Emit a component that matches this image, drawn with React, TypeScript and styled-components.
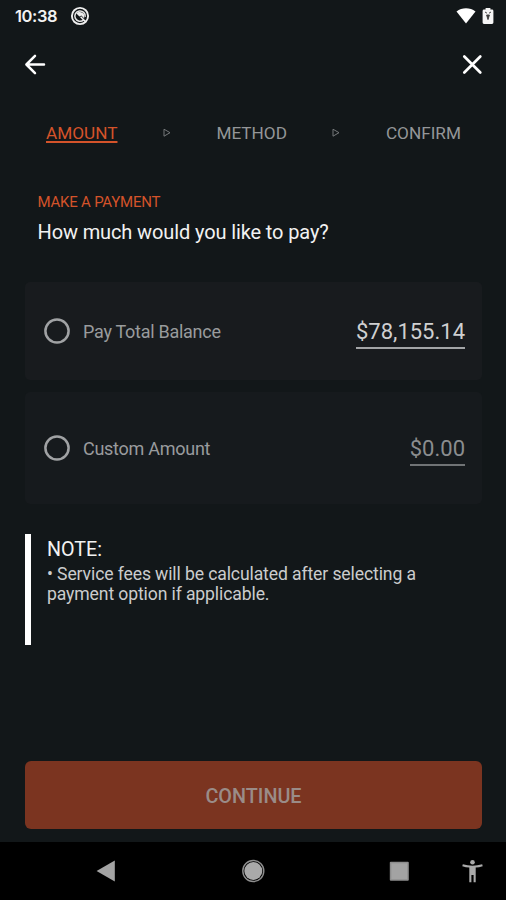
import React from "react";
import styled, { createGlobalStyle } from "styled-components";

const GlobalStyle = createGlobalStyle`
  * { box-sizing: border-box; }
  body { margin: 0; background: #121719; }
`;

const Screen = styled.main`
  width: 506px;
  height: 900px;
  display: flex;
  flex-direction: column;
  overflow: hidden;
  background: #121719;
  color: #f2f2f2;
  font-family: Roboto, "Liberation Sans", sans-serif;
`;

const StatusBar = styled.div`
  height: 32px;
  padding: 0 12px 1px 15px;
  display: flex;
  align-items: center;
  flex-shrink: 0;
`;

const Clock = styled.span`
  width: 55px;
  font: 600 16.5px/32px Inter, sans-serif;
  letter-spacing: -0.4px;
  white-space: nowrap;
`;

const StatusIcons = styled.div`
  margin-left: auto;
  display: flex;
  align-items: center;
  gap: 6px;
`;

const Header = styled.header`
  height: 65px;
  padding: 0 22px 1px 23px;
  display: flex;
  align-items: center;
  justify-content: space-between;
  flex-shrink: 0;
`;

const IconButton = styled.button`
  width: 24px;
  height: 24px;
  padding: 0;
  border: 0;
  background: none;
  color: #fff;
  svg { display: block; }
`;

const Steps = styled.nav`
  height: 72px;
  padding: 0 45px 0 46px;
  display: flex;
  align-items: center;
  justify-content: space-between;
  flex-shrink: 0;
`;

const Step = styled.span<{ $active?: boolean }>`
  font-size: 17.2px;
  line-height: 20px;
  color: ${(p) => (p.$active ? "#d4532a" : "#949698")};
  text-decoration: ${(p) => (p.$active ? "underline" : "none")};
  text-decoration-thickness: 1.5px;
  text-underline-offset: 2px;
`;

const Intro = styled.section`
  height: 113px;
  padding: 24px 37px 0 37.5px;
  flex-shrink: 0;
`;

const Eyebrow = styled.div`
  font-size: 15px;
  line-height: 18px;
  letter-spacing: -0.22px;
  color: #d4532a;
`;

const Title = styled.h1`
  margin: 9px 0 0;
  font-size: 20px;
  line-height: 24px;
  font-weight: 400;
  letter-spacing: -0.12px;
`;

const Options = styled.section`
  margin: 0 24px 0 25px;
  display: flex;
  flex-direction: column;
  gap: 12px;
`;

const Option = styled.label<{ $height: number; $raised?: boolean }>`
  height: ${(p) => p.$height}px;
  padding: 0 17px 0 19px;
  display: flex;
  align-items: center;
  border-radius: 5px;
  background: ${(p) => (p.$raised ? "#181b1e" : "#161a1d")};
`;

const RadioIcon = styled.svg`
  width: 26px;
  height: 26px;
  margin-right: 13px;
  fill: none;
  stroke: #a0a2a4;
  stroke-width: 2.5px;
`;

const OptionLabel = styled.span`
  padding-top: 2px;
  font-size: 18px;
  line-height: 22px;
  letter-spacing: -0.27px;
  color: #999b9d;
`;

const Amount = styled.span<{ $muted?: boolean }>`
  margin: 3px 0 0 auto;
  font-size: 22px;
  line-height: 31px;
  border-bottom: 2px solid ${(p) => (p.$muted ? "#707375" : "#a3a5a7")};
  color: ${(p) => (p.$muted ? "#8b8d8f" : "#cfd0d1")};
`;

const Note = styled.aside`
  width: 457px;
  height: 111px;
  margin: 30px 0 0 25px;
  padding: 4px 0 0 16px;
  border-left: 6px solid #fff;
  flex-shrink: 0;
`;

const NoteTitle = styled.div`
  font-size: 19.7px;
  line-height: 23px;
`;

const NoteText = styled.p`
  margin: 3px 0 0;
  font-size: 17.6px;
  line-height: 20px;
  letter-spacing: -0.12px;
  color: #cbcccd;
  white-space: nowrap;
`;

const Footer = styled.div`
  margin-top: auto;
  padding: 0 24px 13px 25px;
`;

const Continue = styled.button`
  display: block;
  width: 100%;
  height: 68px;
  padding: 4px 0 0;
  border: 0;
  border-radius: 6px;
  background: #7b3420;
  color: #9a8c88;
  font: 500 19.8px/24px Roboto, sans-serif;
`;

const SystemNav = styled.div`
  height: 58px;
  padding: 0 22px 0 94px;
  display: flex;
  align-items: center;
  background: #000;
  flex-shrink: 0;
`;

const NavItem = styled.span<{ $gap?: number }>`
  width: 24px;
  height: 24px;
  margin-left: ${(p) => p.$gap ?? 0}px;
  svg { display: block; }
`;

function Radio() {
  return (
    <RadioIcon viewBox="0 0 26 26">
      <circle cx="13" cy="13" r="11.6" />
    </RadioIcon>
  );
}

function StepArrow() {
  return (
    <svg width="8" height="10" viewBox="0 0 8 10" fill="none" stroke="#75787a">
      <path d="M1 1.2L7 4.7L1 8.2Z" />
    </svg>
  );
}

export default function App() {
  return (
    <Screen>
      <GlobalStyle />
      <StatusBar>
        <Clock>10:38</Clock>
        <svg width="20" height="20" viewBox="0 0 20 20" fill="none">
          <circle cx="10" cy="10" r="8.1" stroke="#eee" strokeWidth="1.9" />
          <path d="M13.6 13.9A5.2 5.2 0 1 1 15.2 10.8" stroke="#e4e4e4" strokeWidth="1.5" />
          <path d="M6.4 7.4C8.4 5.2 12.6 5.6 14.2 8.8V12.4L11.4 9.6L9.4 10.6Z" fill="#eee" />
          <path d="M10.6 10.8L15.2 15.4" stroke="#eee" strokeWidth="1.5" />
        </svg>
        <StatusIcons>
          <svg width="20" height="18" viewBox="0 0 20 18">
            <path d="M.5 4.6C6 .2 14 .2 19.5 4.6L10 16.6Z" fill="#fff" />
          </svg>
          <svg width="12" height="18" viewBox="0 0 12 18">
            <path d="M3.6 1H8.4V2.6H10Q11.4 2.6 11.4 4V15.6Q11.4 17 10 17H2Q.6 17 .6 15.6V4Q.6 2.6 2 2.6H3.6Z" fill="#f5f5f5" />
            <path d="M3 5L5 6.2M9 5L7 6.2M4.6 8H7.4L6 12.6Z" stroke="#444" fill="#333" strokeWidth="1" />
          </svg>
        </StatusIcons>
      </StatusBar>
      <Header>
        <IconButton aria-label="Back">
          <svg width="24" height="24" viewBox="0 0 24 24" fill="none" stroke="currentColor" strokeWidth="2.5" strokeLinecap="round" strokeLinejoin="round">
            <path d="M12 3.8L3.4 12.5L12 21.2M3.8 12.5H21" />
          </svg>
        </IconButton>
        <IconButton aria-label="Close">
          <svg width="24" height="24" viewBox="0 0 24 24" stroke="currentColor" strokeWidth="2.7" strokeLinecap="round">
            <path d="M4.3 4.5L20.3 20.5M20.3 4.5L4.3 20.5" />
          </svg>
        </IconButton>
      </Header>
      <Steps>
        <Step $active>AMOUNT</Step>
        <StepArrow />
        <Step>METHOD</Step>
        <StepArrow />
        <Step>CONFIRM</Step>
      </Steps>
      <Intro>
        <Eyebrow>MAKE A PAYMENT</Eyebrow>
        <Title>How much would you like to pay?</Title>
      </Intro>
      <Options>
        <Option $height={98} $raised>
          <Radio />
          <OptionLabel>Pay Total Balance</OptionLabel>
          <Amount>$78,155.14</Amount>
        </Option>
        <Option $height={112}>
          <Radio />
          <OptionLabel>Custom Amount</OptionLabel>
          <Amount $muted>$0.00</Amount>
        </Option>
      </Options>
      <Note>
        <NoteTitle>NOTE:</NoteTitle>
        <NoteText>
          • Service fees will be calculated after selecting a
          <br />
          payment option if applicable.
        </NoteText>
      </Note>
      <Footer>
        <Continue>CONTINUE</Continue>
      </Footer>
      <SystemNav>
        <NavItem>
          <svg width="24" height="24" viewBox="0 0 24 24">
            <path d="M2.6 12L20.8 1.5V22.5Z" fill="#a3a3a3" />
          </svg>
        </NavItem>
        <NavItem $gap={123}>
          <svg width="24" height="24" viewBox="0 0 24 24">
            <circle cx="12.3" cy="12" r="9" fill="#a9a9a9" />
            <circle cx="12.3" cy="12" r="10.5" fill="none" stroke="#8e8e8e" strokeWidth="1.4" />
          </svg>
        </NavItem>
        <NavItem $gap={122}>
          <svg width="24" height="24" viewBox="0 0 24 24">
            <rect x="2.8" y="2.8" width="19" height="19" rx="1" fill="#8d8d8d" />
            <rect x="4.3" y="4.3" width="16" height="16" fill="#a3a3a3" />
          </svg>
        </NavItem>
        <NavItem $gap={49}>
          <svg width="24" height="24" viewBox="0 0 24 24" fill="#aaa">
            <circle cx="12.5" cy="3.2" r="2.3" />
            <path d="M2.8 5.2Q12.5 8.1 22.2 5.2L22.7 7.2Q19 8.3 15.7 8.6V23.3H13.6V16H11.4V23.3H9.3V8.6Q6 8.3 2.3 7.2Z" />
          </svg>
        </NavItem>
      </SystemNav>
    </Screen>
  );
}
